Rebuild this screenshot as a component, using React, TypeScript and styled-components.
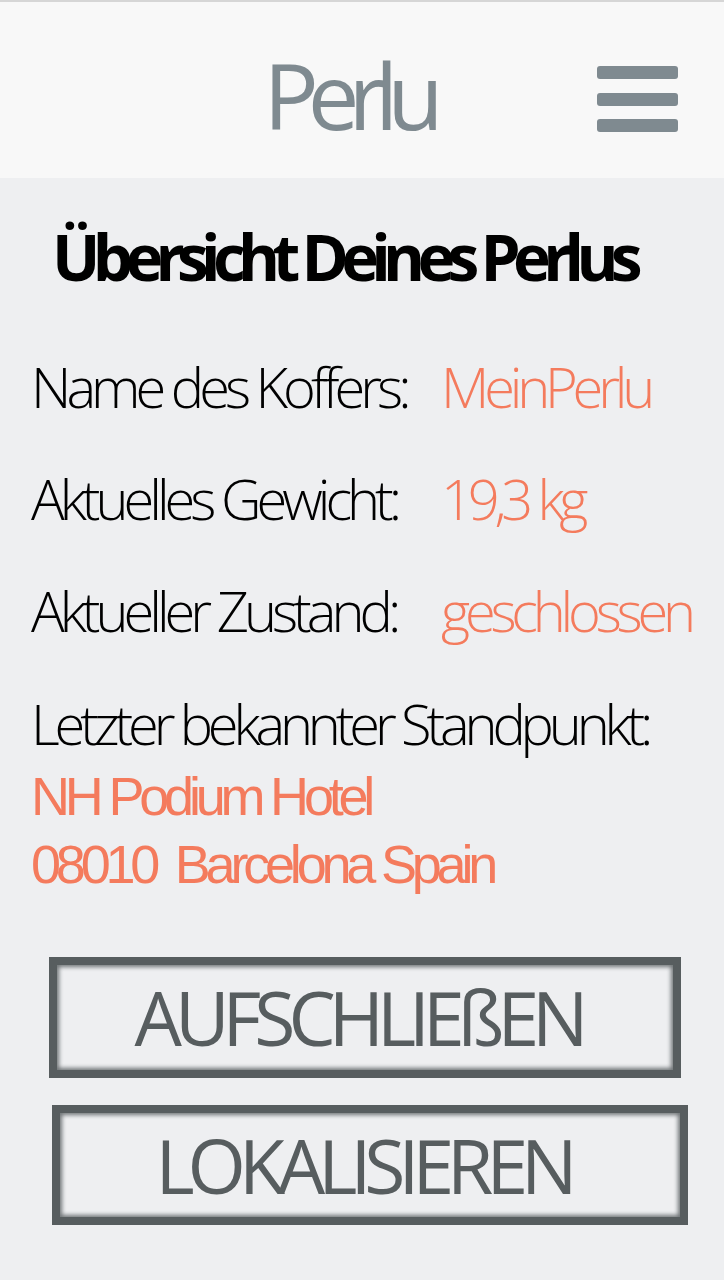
import React from "react";
import styled, { createGlobalStyle } from "styled-components";

const Global = createGlobalStyle`
  html, body { margin: 0; padding: 0; background: #eeeff1; }
  body { font-family: "Open Sans", sans-serif; }
  * { box-sizing: border-box; }
`;

const Page = styled.div`
  width: 724px;
  min-height: 1280px;
  background: #eeeff1;
  display: flex;
  flex-direction: column;
`;

const Header = styled.header`
  height: 178px;
  background: #f8f8f8;
  border-top: 2px solid #d6d6d6;
  display: grid;
  grid-template-columns: 1fr auto 1fr;
  align-items: center;
  padding: 18px 46px 0 18px;
`;

const Title = styled.h1`
  grid-column: 2;
  margin: -8px 0 0 0;
  font-family: "Open Sans", sans-serif;
  font-weight: 400;
  font-size: 92px;
  line-height: 92px;
  letter-spacing: -11px;
  color: #7f8a90;
`;

const Burger = styled.div`
  grid-column: 3;
  justify-self: end;
  width: 81px;
  display: flex;
  flex-direction: column;
  gap: 13.5px;
`;

const Bar = styled.span`
  display: block;
  height: 13px;
  border-radius: 3px;
  background: #7f8a90;
`;

const Main = styled.main`
  display: flex;
  flex-direction: column;
  padding: 0 0 0 31px;
`;

const Heading = styled.h2`
  margin: 47px 0 0 21px;
  font-family: "Open Sans", sans-serif;
  font-weight: 700;
  font-size: 64px;
  line-height: 64px;
  letter-spacing: -7.7px;
  color: #000;
  white-space: nowrap;
`;

const InfoList = styled.div`
  margin-top: 41px;
  display: flex;
  flex-direction: column;
`;

const Row = styled.div`
  display: grid;
  grid-template-columns: 410px 1fr;
  height: 112px;
  align-items: start;
`;

const Label = styled.span`
  font-family: "Open Sans", sans-serif;
  font-weight: 300;
  font-size: 56px;
  line-height: 112px;
  letter-spacing: -5px;
  color: #000;
  white-space: nowrap;
`;

const Value = styled.span`
  font-family: "Open Sans", sans-serif;
  font-weight: 300;
  font-size: 56px;
  line-height: 112px;
  letter-spacing: -5.2px;
  color: #f47b5d;
  white-space: nowrap;
`;

const Location = styled.div`
  display: flex;
  flex-direction: column;
  margin-top: 18px;
`;

const LocationLabel = styled(Label)`
  line-height: 78px;
  letter-spacing: -5.15px;
`;

const Address = styled.span`
  font-family: "Liberation Sans", Arial, sans-serif;
  font-size: 54px;
  line-height: 68px;
  letter-spacing: -5.2px;
  color: #f47b5d;
  white-space: pre;
`;

const Buttons = styled.div`
  display: flex;
  flex-direction: column;
  gap: 27px;
  margin-top: 59px;
  padding-bottom: 55px;
`;

const ActionButton = styled.button<{ $left: number; $width: number; $height: number }>`
  margin-left: ${(p) => p.$left}px;
  width: ${(p) => p.$width}px;
  height: ${(p) => p.$height}px;
  background: #eeeff1;
  border: 8px solid #575d5f;
  box-shadow: inset 0 0 4px 2px rgba(87, 93, 95, 0.85);
  padding: 0 14px 0 0;
  font-family: "Open Sans", sans-serif;
  font-weight: 400;
  font-size: 75px;
  line-height: 105px;
  letter-spacing: -7px;
  color: #575d5f;
  text-align: center;
  cursor: pointer;
`;

export default function App() {
  return (
    <Page>
      <Global />
      <Header>
        <Title>Perlu</Title>
        <Burger aria-label="Menü">
          <Bar />
          <Bar />
          <Bar />
        </Burger>
      </Header>
      <Main>
        <Heading>Übersicht Deines Perlus</Heading>
        <InfoList>
          <Row>
            <Label>Name des Koffers:</Label>
            <Value>MeinPerlu</Value>
          </Row>
          <Row>
            <Label>Aktuelles Gewicht:</Label>
            <Value>19,3 kg</Value>
          </Row>
          <Row>
            <Label>Aktueller Zustand:</Label>
            <Value>geschlossen</Value>
          </Row>
        </InfoList>
        <Location>
          <LocationLabel>Letzter bekannter Standpunkt:</LocationLabel>
          <Address>NH Podium Hotel</Address>
          <Address>{"08010  Barcelona Spain"}</Address>
        </Location>
      </Main>
      <Buttons>
        <ActionButton $left={49} $width={632} $height={121}>AUFSCHLIEßEN</ActionButton>
        <ActionButton $left={52} $width={636} $height={120}>LOKALISIEREN</ActionButton>
      </Buttons>
    </Page>
  );
}
